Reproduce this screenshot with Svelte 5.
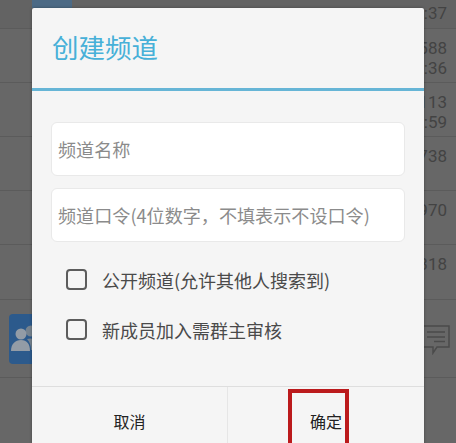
<script>
  const rows = [
    { h: 29, name: 'cdmma123', a: '', b: ':37', top: true },
    { h: 54, a: '588', b: ':36' },
    { h: 54, a: '113', b: ':59' },
    { h: 54, a: '738', b: '' },
    { h: 54, a: '970', b: '' },
    { h: 55, a: '318', b: '' }
  ];
</script>

<div class="page">
  <div class="list">
    {#each rows as r}
      <div class="row" class:top={r.top} style="height:{r.h}px">
        {#if r.top}
          <div class="avatar-top"></div>
          <span class="name">{r.name}</span>
        {/if}
        <div class="nums">
          {#if r.a}<span>{r.a}</span>{/if}
          {#if r.b}<span>{r.b}</span>{/if}
        </div>
      </div>
    {/each}
    <div class="row group">
      <div class="avatar">
        <svg viewBox="0 0 32 50" width="32" height="50">
          <circle cx="22" cy="17" r="5.5" fill="#76838f" />
          <path d="M18 25c7-2 14 2 14 11H22c0-4-1-8-4-11z" fill="#76838f" />
          <circle cx="12" cy="20" r="5.5" fill="#939ca6" />
          <path d="M2 37c0-7 4-11 10-11s9 4 9 11z" fill="#939ca6" />
        </svg>
      </div>
      <svg class="chat" viewBox="0 0 28 30" width="28" height="30" fill="none" stroke="#4b4b4b" stroke-width="1.5">
        <path d="M1 1h26v21H15l-4 6v-6H1z" />
        <path d="M5 7h18M5 12h18M12 16.500h11" />
      </svg>
    </div>
    <div class="row"></div>
  </div>

  <div class="dialog">
    <div class="head"><h1>创建频道</h1></div>
    <div class="body">
      <div class="field">频道名称</div>
      <div class="field">频道口令(4位数字，不填表示不设口令)</div>
      <div class="checks">
        <div class="check"><span class="box"></span><span>公开频道(允许其他人搜索到)</span></div>
        <div class="check"><span class="box"></span><span>新成员加入需群主审核</span></div>
      </div>
    </div>
    <div class="foot">
      <div class="btn">取消</div>
      <div class="btn ok">确定</div>
    </div>
  </div>

  <div class="mark"></div>
</div>

<style>
  :global(body) { margin: 0; }
  .page {
    position: relative;
    width: 456px;
    height: 443px;
    overflow: hidden;
    background: #676767;
    font-family: "Noto Sans CJK SC", Roboto, sans-serif;
  }
  .list { display: flex; flex-direction: column; }
  .row {
    position: relative;
    box-sizing: border-box;
    border-bottom: 1px solid #5b5b5b;
    display: flex;
    justify-content: flex-end;
    flex-shrink: 0;
  }
  .row.top { background: #636363; }
  .avatar-top {
    position: absolute;
    left: 32px;
    top: -32px;
    width: 40px;
    height: 40px;
    background: #4c6a85;
  }
  .name {
    position: absolute;
    left: 80px;
    top: -17px;
    font: 20px/20px Roboto, sans-serif;
    color: #2f2f2f;
  }
  .nums {
    display: flex;
    flex-direction: column;
    align-items: flex-end;
    padding: 9px 9px 0 0;
    font: 17px/20px Roboto, sans-serif;
    color: #434343;
  }
  .row.top .nums { padding-top: 3px; }
  .row.group {
    height: 78px;
    align-items: center;
    justify-content: space-between;
    padding: 0 6px 0 9px;
  }
  .avatar {
    width: 41px;
    height: 50px;
    border-radius: 4px;
    background: #2c5a8c;
    display: flex;
    align-items: center;
  }
  .chat { margin-top: 2px; }
  .row:last-child { height: 70px; border-bottom: 0; }

  .dialog {
    position: absolute;
    left: 32px;
    top: 8px;
    width: 392px;
    height: 445px;
    box-sizing: border-box;
    background: #f5f5f5;
    border-radius: 2px 2px 0 0;
    box-shadow: 0 0 3px rgba(0, 0, 0, 0.35);
    display: flex;
    flex-direction: column;
  }
  .head {
    height: 80px;
    flex-shrink: 0;
    border-bottom: 3px solid #66b5d6;
    display: flex;
    align-items: center;
    padding-left: 20px;
  }
  h1 {
    margin: 0 0 1px;
    font-size: 26.5px;
    font-weight: 400;
    color: #47b0d8;
    line-height: 1;
  }
  .body {
    flex: 1;
    display: flex;
    flex-direction: column;
    gap: 12px;
    padding: 31px 19px 0;
  }
  .field {
    box-sizing: border-box;
    height: 54px;
    background: #fff;
    border: 1px solid #e9e9e9;
    border-radius: 6px;
    display: flex;
    align-items: center;
    padding-left: 6px;
    font-size: 18.1px;
    color: #8b8b8b;
  }
  .checks {
    display: flex;
    flex-direction: column;
    gap: 25px;
    padding: 13px 0 0 15px;
  }
  .check {
    display: flex;
    align-items: center;
    gap: 15px;
    height: 25px;
    font-size: 18px;
    color: #4a4a4a;
  }
  .box {
    box-sizing: border-box;
    width: 21px;
    height: 21px;
    border: 2px solid #5c5c5c;
    border-radius: 4px;
  }
  .foot {
    height: 66px;
    flex-shrink: 0;
    border-top: 1px solid #dedede;
    display: flex;
  }
  .btn {
    box-sizing: border-box;
    padding-top: 22px;
    line-height: 24px;
    font-size: 16px;
    color: #222;
    text-align: center;
  }
  .btn:first-child { width: 196px; border-right: 1px solid #e6e6e6; }
  .ok { flex: 1; }
  .mark {
    position: absolute;
    left: 288px;
    top: 389px;
    width: 61px;
    height: 60px;
    box-sizing: border-box;
    border: 4px solid #bb1a1c;
  }
</style>
